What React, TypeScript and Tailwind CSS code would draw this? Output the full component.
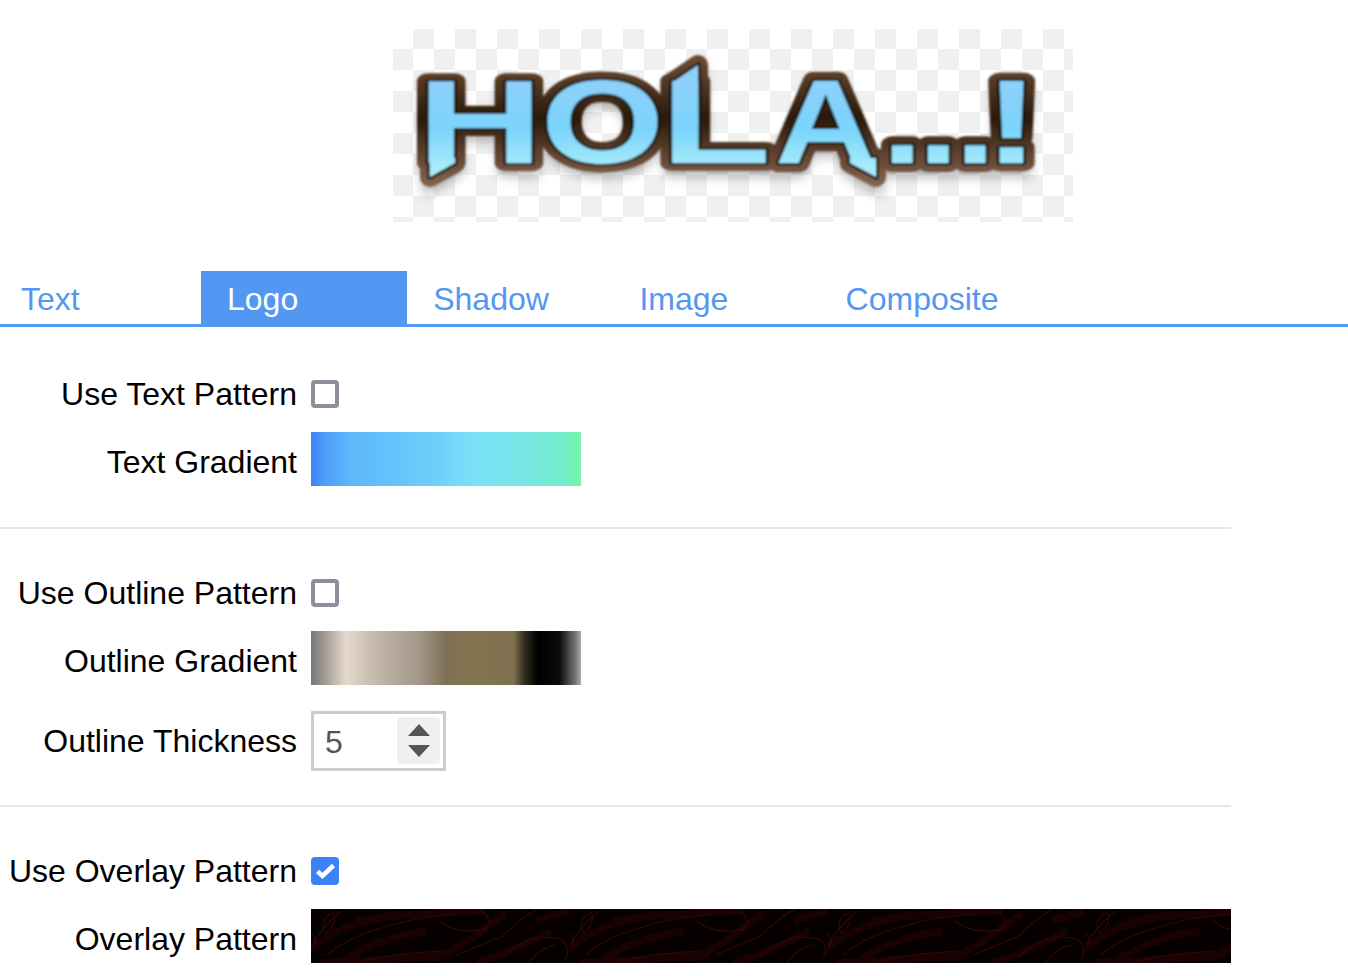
import React from "react";

const sans = "font-['Liberation_Sans',Arial,sans-serif]";

const glyphs: { c: string; tx: number; sx: number }[] = [
  { c: "H", tx: 417, sx: 1.47 },
  { c: "O", tx: 541, sx: 1.33 },
  { c: "L", tx: 660, sx: 1.53 },
  { c: "A", tx: 775, sx: 1.18 },
  { c: ".", tx: 882, sx: 1.23 },
  { c: ".", tx: 918, sx: 1.23 },
  { c: ".", tx: 955, sx: 1.23 },
  { c: "!", tx: 984, sx: 1.4 },
];

function Logo() {
  return (
    <svg className="absolute left-0 top-0" width="680" height="193" viewBox="393 29 680 193" aria-label="HOLA...!">
      <defs>
        <linearGradient id="fillG" gradientUnits="userSpaceOnUse" x1="0" y1="75" x2="0" y2="175">
          <stop offset="0" stopColor="#8fd0fb" />
          <stop offset="0.55" stopColor="#7bd4fc" />
          <stop offset="1" stopColor="#b2f0fb" />
        </linearGradient>
        <linearGradient id="strokeG" gradientUnits="userSpaceOnUse" x1="0" y1="60" x2="0" y2="190">
          <stop offset="0" stopColor="#6b4a33" />
          <stop offset="0.2" stopColor="#4f3520" />
          <stop offset="0.45" stopColor="#2a1a0a" />
          <stop offset="0.72" stopColor="#5f4230" />
          <stop offset="1" stopColor="#8a6a55" />
        </linearGradient>
        <filter id="softG" x="-5%" y="-20%" width="110%" height="140%">
          <feGaussianBlur stdDeviation="0.8" />
        </filter>
        <filter id="shadowG" x="-5%" y="-20%" width="110%" height="140%">
          <feGaussianBlur stdDeviation="6" />
        </filter>
        <g id="logoText">
          {glyphs.map((g, i) => (
            <text
              key={i}
              y="163"
              transform={`translate(${g.tx} 0) scale(${g.sx} 1)`}
              vectorEffect="non-scaling-stroke"
              fontFamily="'Liberation Sans', Arial, sans-serif"
              fontWeight="700"
              fontSize="119"
            >
              {g.c}
            </text>
          ))}
          <path d="M430 158 L455 158 L455 163 L430 177 Z" />
          <path d="M673 82 L698 65 L698 85 L673 85 Z" />
          <path d="M850 158 L876 158 L876 177 L850 163 Z" />
        </g>
      </defs>
      <use href="#logoText" y="8" fill="#000" stroke="#000" strokeWidth="14" opacity="0.28" filter="url(#shadowG)" />
      <g filter="url(#softG)" strokeLinejoin="round">
        <use href="#logoText" fill="#3a2612" stroke="url(#strokeG)" strokeWidth="20" />
        <use href="#logoText" fill="#1a1008" stroke="#1e1208" strokeWidth="5" />
        <use href="#logoText" fill="url(#fillG)" />
      </g>
    </svg>
  );
}

function Checkbox({ checked = false }: { checked?: boolean }) {
  return (
    <span className="relative block h-[28px] w-[28px]">
      <input
        type="checkbox"
        readOnly
        checked={checked}
        className="block h-[28px] w-[28px] appearance-none rounded-[4px] border-[4px] border-[#8f8e9b] bg-white checked:border-[#3b82f6] checked:bg-[#3b82f6]"
      />
      {checked && (
        <svg className="absolute left-0 top-0" width="28" height="28" viewBox="0 0 28 28" fill="none">
          <path d="M6.5 14.5 L11.5 19 L22.5 8.5" stroke="#fff" strokeWidth="4.5" />
        </svg>
      )}
    </span>
  );
}

function Row({
  label,
  children,
  className,
  labelClass,
}: {
  label: string;
  children: React.ReactNode;
  className: string;
  labelClass?: string;
}) {
  return (
    <div className={`flex items-center ${className}`}>
      <label className={`w-[297px] whitespace-nowrap text-right text-[32px] leading-[36px] text-black ${labelClass ?? ""}`}>
        {label}
      </label>
      <div className="ml-[14px] flex-1">{children}</div>
    </div>
  );
}

function OverlayPattern() {
  return (
    <svg className="block" width="920" height="54" aria-hidden="true">
      <defs>
        <pattern id="woodG" width="258" height="54" patternUnits="userSpaceOnUse">
          <rect width="258" height="54" fill="#060000" />
          <g fill="none" stroke="#1a0202" strokeWidth="7">
            <path d="M-5 44 C20 20 50 12 85 6" />
            <path d="M34 50 C60 34 85 26 115 22" />
            <path d="M120 50 C150 40 170 22 195 4" />
            <path d="M165 54 C190 46 215 36 240 22" />
            <path d="M44 12 C70 8 110 4 175 2" />
            <path d="M10 54 C40 52 90 50 140 46" />
            <path d="M225 12 C235 8 250 4 262 2" />
          </g>
          <g fill="none" stroke="#300606" strokeWidth="1.1">
            <path d="M2 34 C8 24 18 12 30 2" />
            <path d="M14 24 C9 16 14 6 22 4 C26 8 22 20 14 24 Z" />
            <path d="M-2 24 C4 26 6 32 2 38" />
            <path d="M16 46 C40 26 65 20 96 12 C112 8 130 8 146 4" />
            <path d="M128 12 C140 22 156 24 176 20" />
            <path d="M170 2 C180 8 180 16 172 22" />
            <path d="M146 46 C170 36 185 30 190 28 C200 20 210 8 226 0" />
            <path d="M192 48 C205 34 226 24 250 30 C258 36 258 44 254 50" />
            <path d="M48 54 C80 44 110 44 130 42" />
            <path d="M218 54 C228 40 240 36 246 36" />
          </g>
        </pattern>
      </defs>
      <rect width="920" height="54" fill="url(#woodG)" />
    </svg>
  );
}

function Divider({ className }: { className: string }) {
  return <hr className={`w-[1231px] border-0 border-t-2 border-[#e8e8e8] ${className}`} />;
}

export default function App() {
  const tabs = ["Text", "Logo", "Shadow", "Image", "Composite"];
  return (
    <div className={`h-[976px] w-[1348px] overflow-hidden bg-white ${sans}`}>
      <div className="pl-[393px] pt-[29px]">
        <div className="relative h-[193px] w-[680px] bg-[conic-gradient(#f0f0f0_25%,#ffffff_0_50%,#f0f0f0_0_75%,#ffffff_0)] bg-[length:42px_42px] bg-[position:-1px_-1px]">
          <Logo />
        </div>
      </div>

      <div className="mt-[49px] flex h-[56px] border-b-[3px] border-[#5298f2]">
        {tabs.map((t, i) => (
          <div
            key={t}
            className={`${i === 0 ? "w-[201px] pl-[21px]" : "w-[206.2px] pl-[26px]"} text-[32px] leading-[56px] ${
              i === 1 ? "bg-[#5298f2] text-white" : "text-[#5298f2]"
            }`}
          >
            {t}
          </div>
        ))}
      </div>

      <Row label="Use Text Pattern" className="mt-[53px] h-[28px]">
        <Checkbox />
      </Row>
      <Row label="Text Gradient" labelClass="pt-[6px]" className="mt-[24px] h-[54px]">
        <div className="h-[54px] w-[270px] bg-[linear-gradient(90deg,#3b80f8_0%,#4f9dfa_5%,#5cb7fb_14%,#6ccefb_45%,#7ae0f9_60%,#76e8e0_82%,#74ecc4_95%,#75f7a4_100%)]" />
      </Row>
      <Divider className="mt-[41px]" />

      <Row label="Use Outline Pattern" className="mt-[50px] h-[28px]">
        <Checkbox />
      </Row>
      <Row label="Outline Gradient" labelClass="pt-[6px]" className="mt-[24px] h-[54px]">
        <div className="h-[54px] w-[270px] bg-[linear-gradient(90deg,#777674_0%,#a09a93_5%,#e6d8cc_13%,#cfc3b6_20%,#bdb1a3_27%,#a3968a_40%,#7f7157_50%,#83744f_62%,#7f714f_75%,#352e20_79%,#000000_84%,#0a0a0a_92%,#777777_98%,#aaaaaa_100%)]" />
      </Row>
      <Row label="Outline Thickness" className="mt-[26px] h-[60px]">
        <div className="relative h-[60px] w-[135px] border-[3px] border-[#cccccc] bg-white">
          <input
            type="text"
            readOnly
            value="5"
            className="block h-full w-full bg-white pl-[11px] pt-[3px] text-[32px] text-[#555555] outline-none"
          />
          <span className="absolute left-[83px] top-[3px] flex h-[47px] w-[43px] flex-col items-center justify-center gap-[9px] rounded-[4px] bg-[#f0f0f0]">
            <svg width="22" height="12" viewBox="0 0 22 12">
              <path d="M11 0 L22 12 L0 12 Z" fill="#555555" />
            </svg>
            <svg width="22" height="12" viewBox="0 0 22 12">
              <path d="M0 0 L22 0 L11 12 Z" fill="#555555" />
            </svg>
          </span>
        </div>
      </Row>
      <Divider className="mt-[34px]" />

      <Row label="Use Overlay Pattern" className="mt-[50px] h-[28px]">
        <Checkbox checked />
      </Row>
      <Row label="Overlay Pattern" labelClass="pt-[6px]" className="mt-[24px] h-[54px]">
        <OverlayPattern />
      </Row>
    </div>
  );
}
